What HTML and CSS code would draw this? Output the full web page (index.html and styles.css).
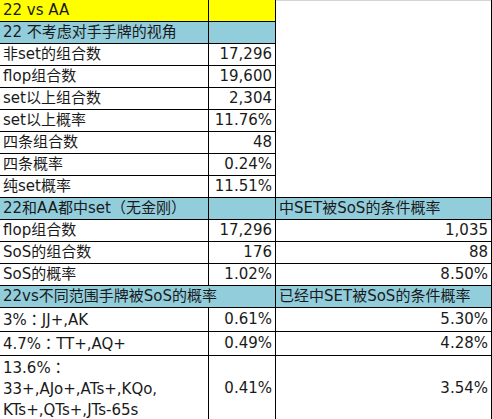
FILE: index.html
```html
<!DOCTYPE html>
<html lang="zh-CN">
<head>
  <meta charset="UTF-8">
  <title>22 vs AA</title>
  <link rel="stylesheet" href="styles.css">
</head>
<body>
  <table class="sheet">
    <colgroup>
      <col class="col-label">
      <col class="col-num">
      <col class="col-cond">
    </colgroup>
    <tr class="title">
      <td>22 vs AA</td>
      <td></td>
      <td class="blank" rowspan="9"></td>
    </tr>
    <tr class="head">
      <td>22 不考虑对手手牌的视角</td>
      <td></td>
    </tr>
    <tr><td>非set的组合数</td><td class="num">17,296</td></tr>
    <tr><td>flop组合数</td><td class="num">19,600</td></tr>
    <tr><td>set以上组合数</td><td class="num">2,304</td></tr>
    <tr><td>set以上概率</td><td class="num">11.76%</td></tr>
    <tr><td>四条组合数</td><td class="num">48</td></tr>
    <tr><td>四条概率</td><td class="num">0.24%</td></tr>
    <tr><td>纯set概率</td><td class="num">11.51%</td></tr>
    <tr class="head">
      <td>22和AA都中set（无金刚）</td>
      <td></td>
      <td>中SET被SoS的条件概率</td>
    </tr>
    <tr><td>flop组合数</td><td class="num">17,296</td><td class="num">1,035</td></tr>
    <tr><td>SoS的组合数</td><td class="num">176</td><td class="num">88</td></tr>
    <tr><td>SoS的概率</td><td class="num">1.02%</td><td class="num">8.50%</td></tr>
    <tr class="head">
      <td colspan="2">22vs不同范围手牌被SoS的概率</td>
      <td>已经中SET被SoS的条件概率</td>
    </tr>
    <tr><td>3%<span class="colon" lang="ja">：</span>JJ+,AK</td><td class="num">0.61%</td><td class="num">5.30%</td></tr>
    <tr><td>4.7%<span class="colon" lang="ja">：</span>TT+,AQ+</td><td class="num">0.49%</td><td class="num">4.28%</td></tr>
    <tr class="tall">
      <td>13.6%<span class="colon" lang="ja">：</span><br>33+,AJo+,ATs+,KQo,<br>KTs+,QTs+,JTs-65s</td>
      <td class="num">0.41%</td>
      <td class="num">3.54%</td>
    </tr>
  </table>
</body>
</html>
```

FILE: styles.css
```css
body {
  margin: 0;
  background: #fff;
  font-family: "DejaVu Sans", "Noto Sans CJK SC", sans-serif;
  font-size: 15px;
  color: #1a1a1a;
}

.sheet {
  border-collapse: separate;
  border-spacing: 0;
  table-layout: fixed;
  width: 492px;
}

.col-label { width: 209px; }
.col-num { width: 67px; }
.col-cond { width: 216px; }

.sheet td {
  box-sizing: border-box;
  height: 22px;
  padding: 0 3px;
  line-height: 21px;
  border-right: 1px solid #000;
  border-bottom: 1px solid #000;
  white-space: nowrap;
  overflow: visible;
  vertical-align: middle;
}

.sheet td.num {
  text-align: right;
}

.colon {
  font-family: "Noto Sans CJK JP", "Noto Sans CJK KR", sans-serif;
}

.title td {
  background: #ffff00;
}

.sheet td.blank {
  background: #fff;
  box-shadow: inset 0 1px #d4d4d4;
}

.head td {
  background: #92cddc;
}

.tall td {
  height: 66px;
}
```
